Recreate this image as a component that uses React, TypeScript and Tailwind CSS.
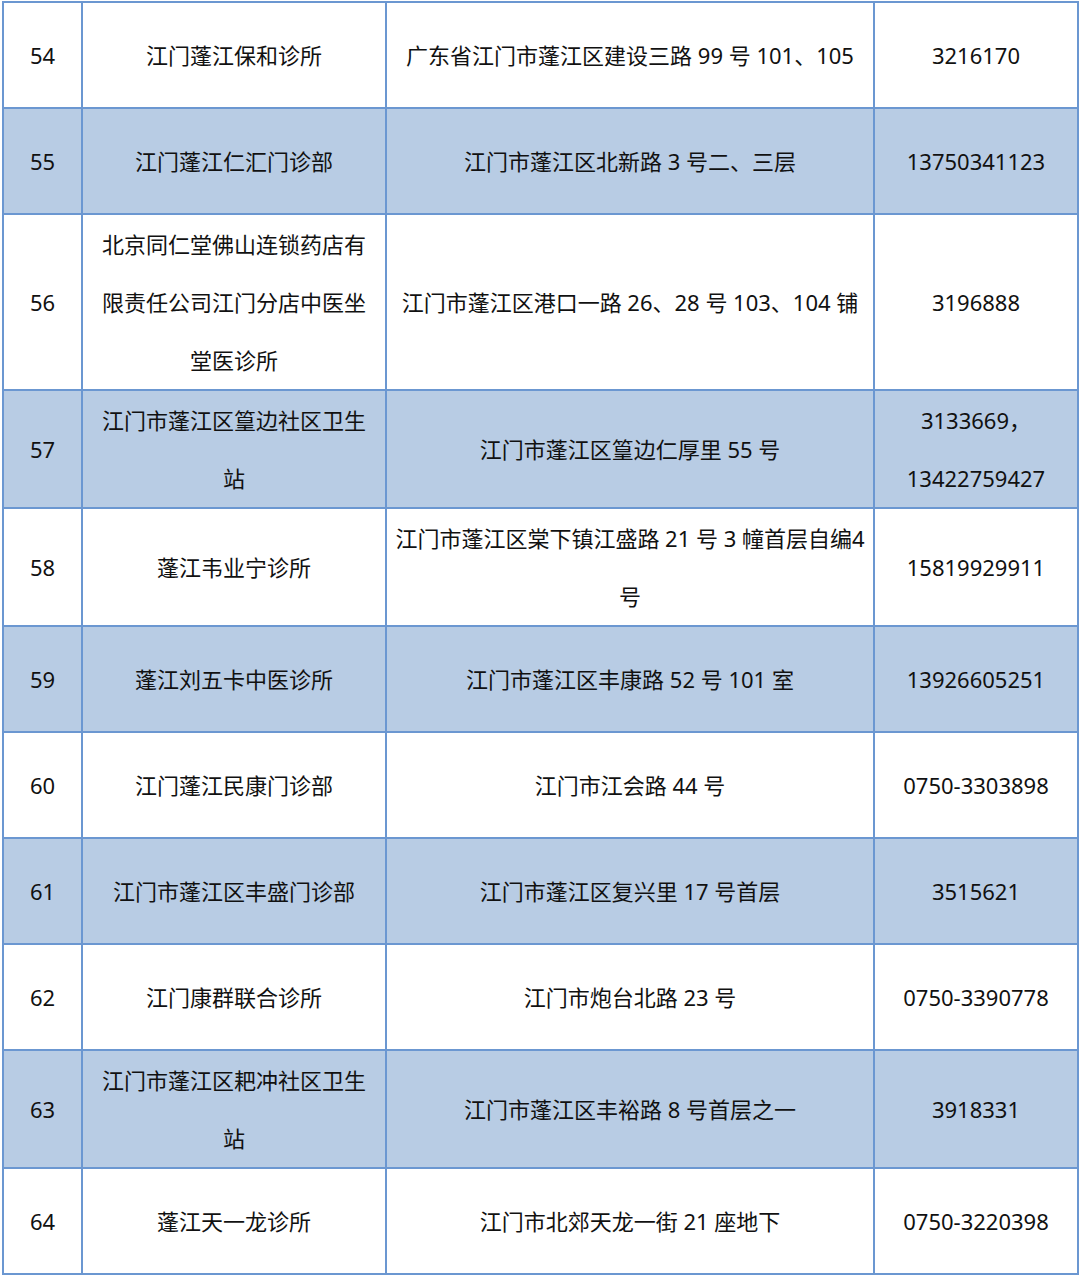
import React from "react";

type Row = {
  no: string;
  name: React.ReactNode;
  addr: React.ReactNode;
  tel: React.ReactNode;
};

const rows: Row[] = [
  { no: "54", name: "江门蓬江保和诊所", addr: "广东省江门市蓬江区建设三路 99 号 101、105", tel: "3216170" },
  { no: "55", name: "江门蓬江仁汇门诊部", addr: "江门市蓬江区北新路 3 号二、三层", tel: "13750341123" },
  {
    no: "56",
    name: (
      <>
        北京同仁堂佛山连锁药店有
        <br />
        限责任公司江门分店中医坐
        <br />
        堂医诊所
      </>
    ),
    addr: "江门市蓬江区港口一路 26、28 号 103、104 铺",
    tel: "3196888",
  },
  {
    no: "57",
    name: (
      <>
        江门市蓬江区篁边社区卫生
        <br />站
      </>
    ),
    addr: "江门市蓬江区篁边仁厚里 55 号",
    tel: (
      <>
        3133669，
        <br />
        13422759427
      </>
    ),
  },
  {
    no: "58",
    name: "蓬江韦业宁诊所",
    addr: (
      <>
        江门市蓬江区棠下镇江盛路 21 号 3 幢首层自编4
        <br />号
      </>
    ),
    tel: "15819929911",
  },
  { no: "59", name: "蓬江刘五卡中医诊所", addr: "江门市蓬江区丰康路 52 号 101 室", tel: "13926605251" },
  { no: "60", name: "江门蓬江民康门诊部", addr: "江门市江会路 44 号", tel: "0750-3303898" },
  { no: "61", name: "江门市蓬江区丰盛门诊部", addr: "江门市蓬江区复兴里 17 号首层", tel: "3515621" },
  { no: "62", name: "江门康群联合诊所", addr: "江门市炮台北路 23 号", tel: "0750-3390778" },
  {
    no: "63",
    name: (
      <>
        江门市蓬江区耙冲社区卫生
        <br />站
      </>
    ),
    addr: "江门市蓬江区丰裕路 8 号首层之一",
    tel: "3918331",
  },
  { no: "64", name: "蓬江天一龙诊所", addr: "江门市北郊天龙一街 21 座地下", tel: "0750-3220398" },
];

// single-line rows are 106px tall; wrapped text runs on a 58px line
const cell =
  "border-2 border-[#6b97d1] h-[106px] text-center align-middle whitespace-nowrap leading-[58px]";

export default function App() {
  return (
    <div className="w-[1080px] h-[1280px] bg-white pt-[1px] pl-[2px]">
      <table
        className="border-collapse table-fixed w-[1075px] text-[22px] text-[#111111]"
        style={{ fontFamily: '"Noto Sans", "Noto Sans CJK SC", sans-serif' }}
      >
        <colgroup>
          <col className="w-[79px]" />
          <col className="w-[304px]" />
          <col className="w-[488px]" />
          <col className="w-[204px]" />
        </colgroup>
        <tbody>
          {rows.map((r, i) => (
            <tr key={r.no} className={i % 2 === 1 ? "bg-[#b8cce4]" : "bg-white"}>
              <td className={cell}>{r.no}</td>
              <td className={cell}>{r.name}</td>
              <td className={cell}>{r.addr}</td>
              <td className={cell}>{r.tel}</td>
            </tr>
          ))}
        </tbody>
      </table>
    </div>
  );
}
